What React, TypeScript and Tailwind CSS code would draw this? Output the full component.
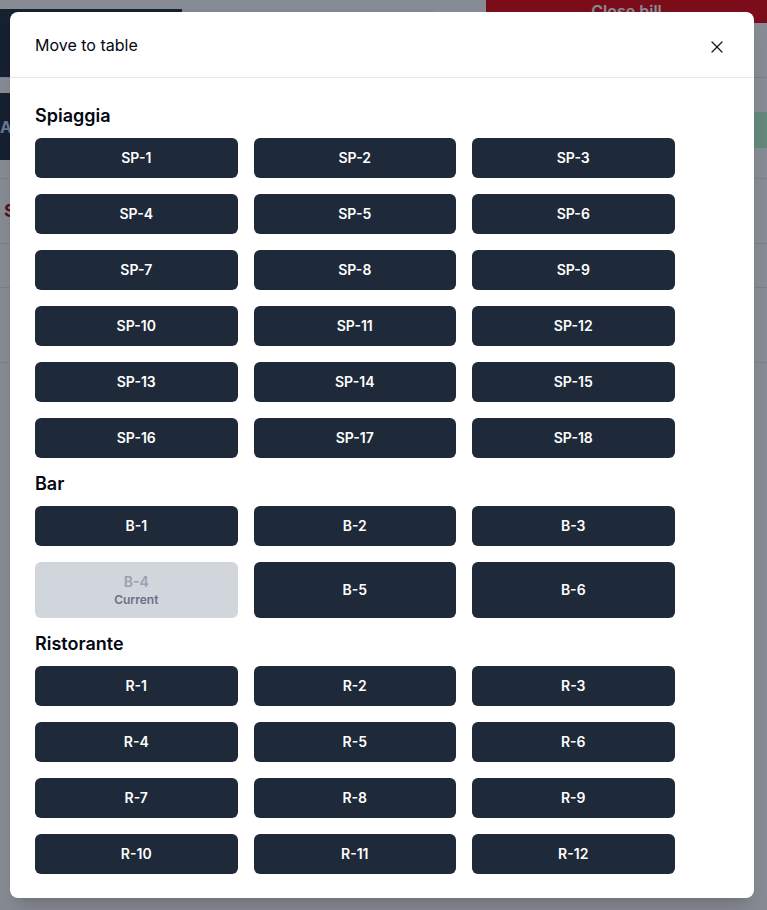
import { X } from 'lucide-react';

const sections = [
  { name: 'Spiaggia', tables: Array.from({ length: 18 }, (_, i) => `SP-${i + 1}`) },
  { name: 'Bar', tables: Array.from({ length: 6 }, (_, i) => `B-${i + 1}`) },
  { name: 'Ristorante', tables: Array.from({ length: 12 }, (_, i) => `R-${i + 1}`) },
];

const currentTable = 'B-4';

function Background() {
  return (
    <div className="min-h-[910px] bg-white">
      <div className="flex items-start justify-between">
        <div className="flex pt-[9px]">
          <div className="w-[182px] h-[68px] bg-gray-800" />
          <div className="w-[258px] h-[68px] bg-gray-100 rounded-tr-xl" />
        </div>
        <button className="w-[281px] h-[23px] bg-red-600 text-white font-semibold text-base leading-[23px]">
          Close bill
        </button>
      </div>
      <div className="h-[16px] border-t border-gray-200" />
      <div className="flex justify-between">
        <div className="w-[182px] h-[67px] bg-gray-800 text-blue-200 font-bold flex items-center">
          <span>Add</span>
        </div>
        <div className="mt-[19px] w-[120px] h-[36px] bg-green-200" />
      </div>
      <div className="h-[18px]" />
      <div className="border-t border-gray-200 h-[65px] flex items-center">
        <span className="text-red-800 font-bold text-lg pl-[4px]">S</span>
      </div>
      <div className="border-t border-gray-200 h-[44px]" />
      <div className="border-t border-gray-200 h-[75px]" />
      <div className="border-t border-gray-200" />
    </div>
  );
}

export default function App() {
  return (
    <div className="relative w-[767px] h-[910px] overflow-hidden" style={{ fontFamily: 'Inter, "Noto Sans", sans-serif' }}>
      <Background />
      <div className="absolute inset-0 bg-gray-900/50" />
      <div className="absolute left-[10px] top-[12px] w-[744px] bg-white rounded-lg shadow-xl">
        <div className="h-[66px] px-[25px] pr-[27px] flex items-center justify-between border-b border-gray-200">
          <h2 className="text-base text-gray-950 font-normal mt-[1px]">Move to table</h2>
          <X className="w-[20px] h-[20px] text-gray-900 mt-[4px]" strokeWidth={1.5} />
        </div>
        <div className="px-[25px] pt-6 pb-6 flex flex-col gap-3">
          {sections.map((section) => (
            <div key={section.name}>
              <h3 className="text-lg leading-7 font-semibold text-gray-950 mb-2">{section.name}</h3>
              <div className="grid grid-cols-[repeat(3,202.5px)] gap-4">
                {section.tables.map((t) => {
                  const isCurrent = t === currentTable;
                  return isCurrent ? (
                    <button
                      key={t}
                      disabled
                      className="h-[56px] rounded-md bg-gray-300 flex flex-col items-center justify-center"
                    >
                      <span className="text-sm font-semibold text-gray-400 leading-5">{t}</span>
                      <span className="text-xs font-semibold text-gray-500 leading-4">Current</span>
                    </button>
                  ) : (
                    <button
                      key={t}
                      className="min-h-[40px] rounded-md bg-gray-800 text-white text-sm font-semibold"
                    >
                      {t}
                    </button>
                  );
                })}
              </div>
            </div>
          ))}
        </div>
      </div>
    </div>
  );
}
